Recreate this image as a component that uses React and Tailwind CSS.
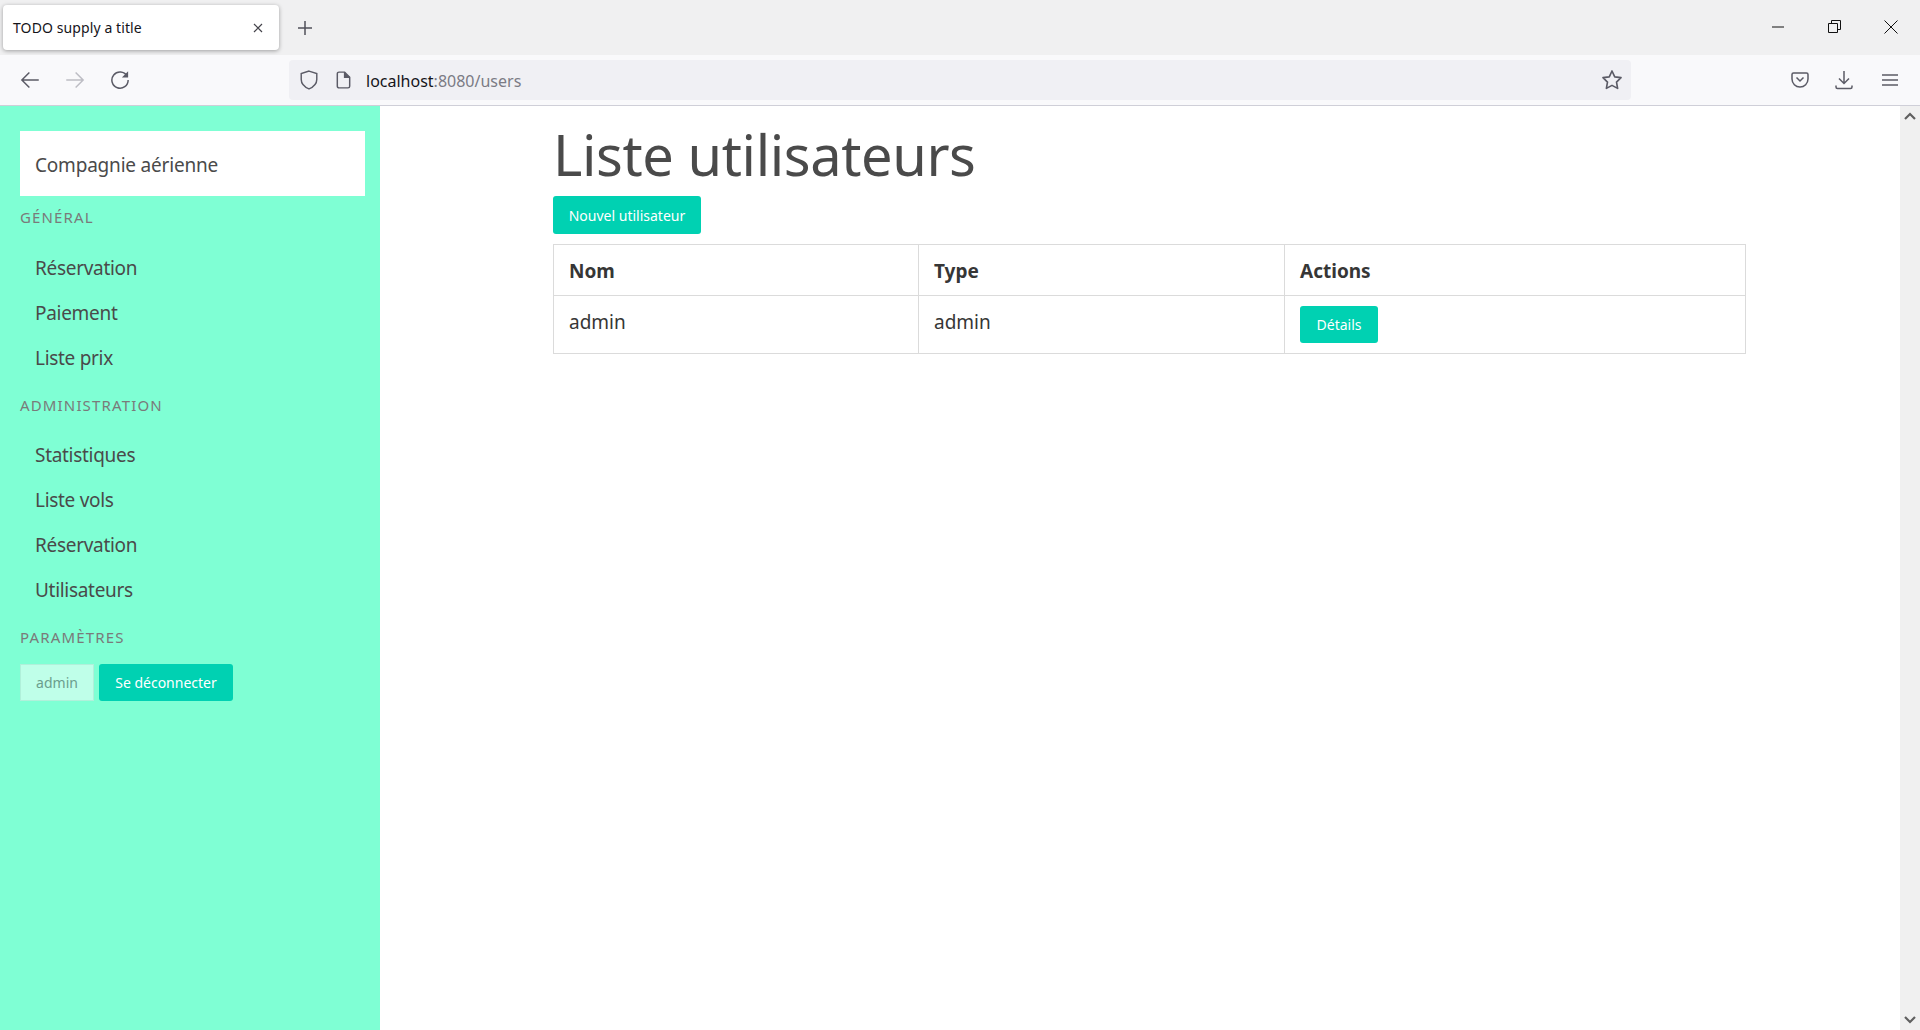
const ui = "[font-family:'Noto_Sans',sans-serif]";

function TabBar() {
  return (
    <div className="h-[55px] shrink-0 bg-[#f0f0f1] flex items-start">
      <div className="ml-[3px] mt-[5px] w-[276px] h-[45px] bg-white rounded-[4px] shadow-[0_1px_4px_rgba(0,0,0,0.35)] flex items-center pl-[10px] pr-[15px] justify-between">
        <span className="text-[14px] text-[#15141a] tracking-[0.1px]">TODO supply a title</span>
        <svg width="12" height="12" viewBox="0 0 12 12" fill="none" stroke="#45444b" strokeWidth="1.2">
          <path d="M2 2l8 8M10 2l-8 8" />
        </svg>
      </div>
      <svg className="ml-[18px] mt-[20px]" width="16" height="16" viewBox="0 0 16 16" fill="none" stroke="#50505a" strokeWidth="1.5">
        <path d="M8 1v14M1 8h14" />
      </svg>
      <div className="ml-auto flex">
        <div className="w-[57px] h-[53px] flex items-center justify-center">
          <svg width="12" height="2" viewBox="0 0 12 2"><path d="M0 1h12" stroke="#111" strokeWidth="1" /></svg>
        </div>
        <div className="w-[57px] h-[53px] flex items-center justify-center">
          <svg width="13" height="13" viewBox="0 0 13 13" fill="none" stroke="#111" strokeWidth="1">
            <path d="M.5 3.500h9v9h-9zM3.500 3.500v-3h9v9h-3" />
          </svg>
        </div>
        <div className="w-[56px] h-[53px] flex items-center justify-center mr-[1px]">
          <svg width="14" height="14" viewBox="0 0 14 14" fill="none" stroke="#111" strokeWidth="1">
            <path d="M.5.5l13 13M13.500.5l-13 13" />
          </svg>
        </div>
      </div>
    </div>
  );
}

function NavBar() {
  return (
    <div className="h-[51px] shrink-0 bg-[#f9f9fb] border-b border-[#cfcfd8] flex items-center">
      <svg className="ml-[20px]" width="20" height="20" viewBox="0 0 16 16" fill="none" stroke="#5b5b66" strokeWidth="1.2">
        <path d="M15 8H1.500M7.500 2l-6 6 6 6" />
      </svg>
      <svg className="ml-[25px]" width="20" height="20" viewBox="0 0 16 16" fill="none" stroke="#bdbdc4" strokeWidth="1.2">
        <path d="M1 8h13.500M8.500 2l6 6-6 6" />
      </svg>
      <svg className="ml-[25px]" width="20" height="20" viewBox="0 0 16 16" fill="none" stroke="#5b5b66" strokeWidth="1.2">
        <path d="M13.600 4.800A6.500 6.500 0 1 0 14.500 8" />
        <path d="M14.500 1v5h-5z" fill="#5b5b66" stroke="none" />
      </svg>
      <div className="ml-[159px] w-[1342px] h-[40px] bg-[#f0f0f4] rounded-[4px] flex items-center">
        <svg className="ml-[11px]" width="18" height="20" viewBox="0 0 16 18" fill="none" stroke="#5b5b66" strokeWidth="1.300">
          <path d="M8 1l7 2.200v5.300c0 4-3.200 6.800-7 8.500-3.800-1.700-7-4.500-7-8.500V3.200z" />
        </svg>
        <svg className="ml-[18px]" width="15" height="18" viewBox="0 0 13 16" fill="none" stroke="#5b5b66" strokeWidth="1.300">
          <path d="M2.500 1h5l4.500 4.500v8a1.500 1.500 0 0 1-1.500 1.500h-8A1.500 1.500 0 0 1 1 13.500v-11A1.500 1.500 0 0 1 2.500 1z" />
          <path d="M7.500 1v4.500H12" fill="#5b5b66" />
        </svg>
        <span className="ml-[15px] mt-[2px] text-[16px] text-[#15141a]">
          localhost<span className="text-[#7b7b84]">:8080/users</span>
        </span>
        <svg className="ml-auto mr-[8px]" width="22" height="22" viewBox="0 0 20 20" fill="none" stroke="#5b5b66" strokeWidth="1.500" strokeLinejoin="round">
          <path d="M10 1.800l2.500 5.300 5.700.8-4.100 4 1 5.700-5.100-2.700-5.100 2.700 1-5.700-4.100-4 5.700-.8z" />
        </svg>
      </div>
      <svg className="ml-[160px]" width="18" height="16" viewBox="0 0 18 16" fill="none" stroke="#5b5b66" strokeWidth="1.500">
        <path d="M2.500 1h13A1.500 1.500 0 0 1 17 2.500V7a8 8 0 0 1-16 0V2.500A1.500 1.500 0 0 1 2.500 1z" />
        <path d="M5.500 5.500L9 9l3.500-3.500" />
      </svg>
      <svg className="ml-[26px]" width="18" height="20" viewBox="0 0 18 20" fill="none" stroke="#5b5b66" strokeWidth="1.500">
        <path d="M9 1v12M4 8.500l5 5 5-5M1 15.500v1.500a1.500 1.500 0 0 0 1.500 1.500h13A1.500 1.500 0 0 0 17 17v-1.500" />
      </svg>
      <svg className="ml-[29px]" width="16" height="14" viewBox="0 0 16 14" fill="none" stroke="#5b5b66" strokeWidth="1.500">
        <path d="M0 2h16M0 7h16M0 12h16" />
      </svg>
    </div>
  );
}

function MenuLabel({ children, className }) {
  return (
    <p className={`text-[15px] leading-[20px] tracking-[1.15px] text-[#7a7a7a] uppercase ${className}`}>{children}</p>
  );
}

function MenuItem({ children }) {
  return <li className="h-[45px] pl-[15px] flex items-center text-[19px] tracking-[-0.3px] text-[#4a4a4a]">{children}</li>;
}

function Sidebar() {
  return (
    <aside className="w-[380px] shrink-0 bg-[#7fffd4] pl-[20px] pr-[15px] pt-[25px]">
      <div className="h-[65px] bg-white pl-[15px] pt-[3px] flex items-center text-[19px] tracking-[-0.2px] text-[#4a4a4a]">Compagnie aérienne</div>
      <MenuLabel className="mt-[11px]">Général</MenuLabel>
      <ul className="mt-[19px]">
        <MenuItem>Réservation</MenuItem>
        <MenuItem>Paiement</MenuItem>
        <MenuItem>Liste prix</MenuItem>
      </ul>
      <MenuLabel className="mt-[14px]">Administration</MenuLabel>
      <ul className="mt-[18px]">
        <MenuItem>Statistiques</MenuItem>
        <MenuItem>Liste vols</MenuItem>
        <MenuItem>Réservation</MenuItem>
        <MenuItem>Utilisateurs</MenuItem>
      </ul>
      <MenuLabel className="mt-[14px]">Paramètres</MenuLabel>
      <div className="mt-[17px] flex gap-[5px]">
        <span className="w-[74px] h-[37px] bg-[#bfffe9] border border-[#b0f0da] text-[14px] text-[#6b9e8d] flex items-center justify-center">admin</span>
        <button className="w-[134px] h-[37px] bg-[#00d1b2] rounded-[3px] text-[14px] text-white">Se déconnecter</button>
      </div>
    </aside>
  );
}

function Scrollbar() {
  return (
    <div className="w-[20px] shrink-0 bg-[#f0f0f0] flex flex-col justify-between items-center py-[6px]">
      <svg width="12" height="8" viewBox="0 0 12 8" fill="none" stroke="#606060" strokeWidth="2.200"><path d="M1 7l5-5 5 5" /></svg>
      <svg width="12" height="8" viewBox="0 0 12 8" fill="none" stroke="#606060" strokeWidth="2.200"><path d="M1 1l5 5 5-5" /></svg>
    </div>
  );
}

function UsersTable() {
  const cell = "border border-[#dbdbdb] px-[15px] text-left align-top";
  return (
    <table className="mt-[10px] w-[1193px] table-fixed border-collapse text-[19px] text-[#363636]">
      <colgroup>
        <col className="w-[365px]" />
        <col className="w-[366px]" />
        <col />
      </colgroup>
      <thead>
        <tr className="h-[51px]">
          <th className={`${cell} font-bold pt-[11px] pb-[9px] leading-[30px]`}>Nom</th>
          <th className={`${cell} font-bold pt-[11px] pb-[9px] leading-[30px]`}>Type</th>
          <th className={`${cell} font-bold pt-[11px] pb-[9px] leading-[30px]`}>Actions</th>
        </tr>
      </thead>
      <tbody>
        <tr className="h-[58px]">
          <td className={`${cell} pt-[11px] pb-[9px] leading-[30px]`}>admin</td>
          <td className={`${cell} pt-[11px] pb-[9px] leading-[30px]`}>admin</td>
          <td className={`${cell} py-[10px]`}>
            <button className="block w-[78px] h-[37px] bg-[#00d1b2] rounded-[3px] text-[14px] text-white">Détails</button>
          </td>
        </tr>
      </tbody>
    </table>
  );
}

export default function App() {
  return (
    <div className={`h-screen w-full flex flex-col overflow-hidden bg-white ${ui}`}>
      <TabBar />
      <NavBar />
      <div className="flex-1 flex min-h-0">
        <Sidebar />
        <main className="flex-1 pl-[173px]">
          <h1 className="h-[90px] text-[56px] leading-[96px] tracking-[-0.4px] text-[#4a4a4a]">Liste utilisateurs</h1>
          <button className="block w-[148px] h-[38px] bg-[#00d1b2] rounded-[3px] text-[14px] text-white">Nouvel utilisateur</button>
          <UsersTable />
        </main>
        <Scrollbar />
      </div>
    </div>
  );
}
